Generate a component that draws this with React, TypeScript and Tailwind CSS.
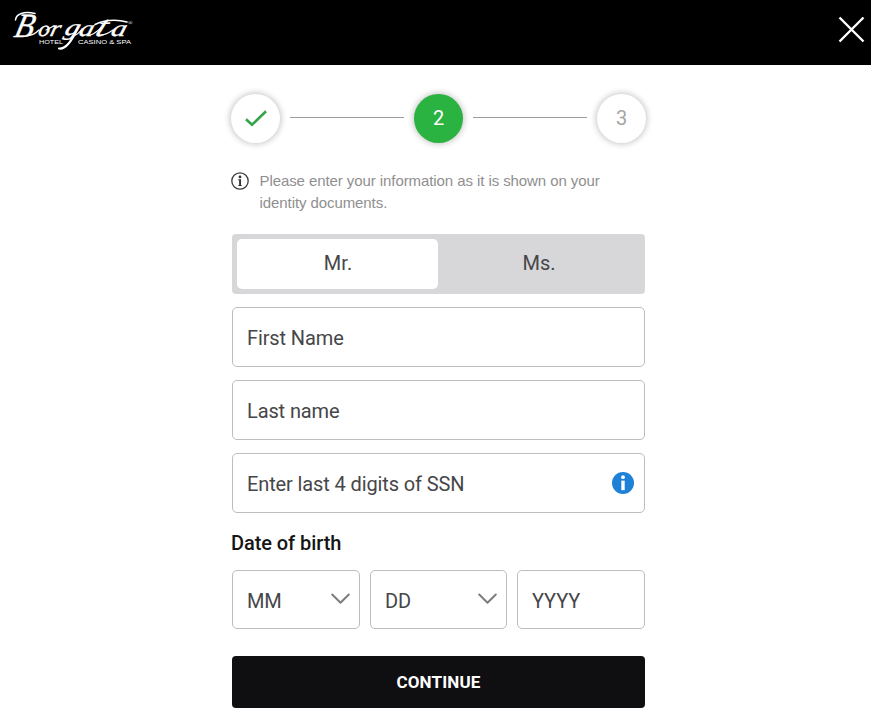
import { useState } from "react";
import type { ReactNode } from "react";
import clsx from "clsx";

function Logo() {
  return (
    <svg width="136" height="56" viewBox="0 0 136 56" fill="#fff" role="img" aria-label="Borgata">
      <g fontFamily="'Liberation Serif', serif" fontStyle="italic" fontSize="23" stroke="#fff" strokeWidth="0.35">
        <text transform="translate(13 36.5) skewX(-14) scale(0.92 1)" fontSize="34">B</text>
        <text transform="translate(37.500 35.500) skewX(-10) scale(1 0.95)">o</text>
        <text transform="translate(49 35.500) skewX(-14) scale(1.15 1)">r</text>
        <text transform="translate(63.500 35) skewX(-20) scale(1.25 1)">g</text>
        <text transform="translate(78 35.500) skewX(-16) scale(1.25 1)">a</text>
        <text transform="translate(94 35.500) skewX(-22) scale(1.25 1)" fontSize="29">t</text>
        <text transform="translate(110 35.500) skewX(-16) scale(1.3 1)">a</text>
        <text x="128" y="25" fontSize="6" fontStyle="normal" strokeWidth="0">®</text>
      </g>
      {/* flourishes */}
      <g fill="none" stroke="#fff" strokeLinecap="round">
        <path d="M15.500 20C16 14 24 11 35 13.500" strokeWidth="1.5" />
        <path d="M27 35.500C32 36 36 33 39 30" strokeWidth="1.2" />
        <path d="M46 30C49 29 51 27 54 26" strokeWidth="1.2" />
        <path d="M59 48.500C65 49.500 72 41 78 27" strokeWidth="2.2" />
        <path d="M73 36C77 35 80 32 82 29" strokeWidth="1.2" />
        <path d="M90 35C94 34.500 97 31 101 28" strokeWidth="1.2" />
        <path d="M95 24.500C104 20.500 115 19 127 22" strokeWidth="1.5" />
        <path d="M101 35C106 35 110 32 113 30" strokeWidth="1.2" />
      </g>
      <g fontFamily="'Liberation Sans', sans-serif" fontSize="5.3">
        <text x="39" y="44" textLength="24" lengthAdjust="spacingAndGlyphs">HOTEL</text>
        <text x="78" y="44" textLength="53" lengthAdjust="spacingAndGlyphs">CASINO &amp; SPA</text>
      </g>
    </svg>
  );
}

function Step({ active, children }: { active?: boolean; children: ReactNode }) {
  return (
    <div
      className={clsx(
        "flex size-[49px] shrink-0 items-center justify-center rounded-full pb-px text-xl shadow-[0_0_6px_1px_rgba(0,0,0,0.24)]",
        active ? "bg-[#2bb341] text-white" : "bg-white text-[#a5a5a5]",
      )}
    >
      {children}
    </div>
  );
}

function StepLine() {
  return <div className="mx-2.5 mb-0.5 h-px flex-1 bg-[#9c9c9c]" />;
}

function Field({ label, className, children }: { label: string; className?: string; children?: ReactNode }) {
  return (
    <div
      className={clsx(
        "flex items-center justify-between rounded-[5px] border border-[#bdbdbf] bg-white pt-0.5 pl-3.5 text-xl tracking-[-0.12px] text-[#464648]",
        className,
      )}
    >
      <span>{label}</span>
      {children}
    </div>
  );
}

function Chevron() {
  return (
    <svg className="mr-[9px] mb-[3px]" width="19" height="12" viewBox="0 0 19 12" fill="none" stroke="#7d7d7f" strokeWidth="2">
      <path d="M1.200 1.500 9.500 9.800 17.800 1.500" strokeLinecap="round" strokeLinejoin="round" />
    </svg>
  );
}

const titles = ["Mr.", "Ms."];

function App() {
  const [title, setTitle] = useState("Mr.");

  return (
    <div className="h-[716px] bg-white font-['Roboto',sans-serif]">
      <header className="flex h-[65px] items-start justify-between bg-black">
        <Logo />
        <button type="button" aria-label="Close" className="mt-4 mr-[6px]">
          <svg width="27" height="27" viewBox="0 0 27 27" fill="none" stroke="#fff" strokeWidth="2.4">
            <path d="M1.500 1.500l24 24M25.500 1.500l-24 24" />
          </svg>
        </button>
      </header>

      <main className="ml-[232px] w-[413px] pt-[29px]">
        <div className="-mx-px flex items-center">
          <Step>
            <svg width="22" height="17" viewBox="0 0 22 17" fill="none" stroke="#35a34b" strokeWidth="2.6">
              <path d="M1 9.200 7 14.800 21 1.300" />
            </svg>
          </Step>
          <StepLine />
          <Step active>2</Step>
          <StepLine />
          <Step>3</Step>
        </div>

        <div className="mt-[27px] flex gap-[10.5px]">
          <svg className="mt-0.5 -ml-px shrink-0" width="18" height="18" viewBox="0 0 18 18">
            <circle cx="9" cy="9" r="8.2" fill="none" stroke="#3c3c3c" strokeWidth="1.3" />
            <circle cx="9" cy="4.9" r="1.4" fill="#333" />
            <path d="M7.300 7.300H10v5.900h.9v.9H7.200v-.9h.9V8.200h-.8z" fill="#333" />
          </svg>
          <p className="w-[360px] font-['Liberation_Sans',sans-serif] text-[15px] leading-[22px] tracking-[-0.08px] text-[#8f8f8f]">
            Please enter your information as it is shown on your identity documents.
          </p>
        </div>

        <div className="mt-5 flex h-[60px] rounded-[4px] bg-[#d7d7d9] p-[5px] pr-1.5">
          {titles.map((item) => (
            <button
              key={item}
              type="button"
              onClick={() => setTitle(item)}
              className={clsx("flex-1 rounded-[5px] pb-0.5 pl-px text-xl text-[#464648]", title === item && "bg-white")}
            >
              {item}
            </button>
          ))}
        </div>

        <div className="mt-[13px] space-y-[13px]">
          <Field label="First Name" className="h-[60px]" />
          <Field label="Last name" className="h-[60px]" />
          <Field label="Enter last 4 digits of SSN" className="h-[60px]">
            <svg className="mr-[10.5px] mb-0.5" width="22" height="22" viewBox="0 0 22 22">
              <circle cx="11" cy="11" r="11" fill="#1f80d8" />
              <circle cx="11" cy="5.2" r="1.9" fill="#fff" />
              <rect x="9.3" y="8.6" width="3.4" height="9.6" fill="#fff" />
            </svg>
          </Field>
        </div>

        <h2 className="mt-4 -ml-px text-xl leading-7 font-medium tracking-[-0.07px] text-[#151515]">Date of birth</h2>

        <div className="mt-[13px] flex gap-2.5">
          <Field label="MM" className="h-[59px] w-32">
            <Chevron />
          </Field>
          <Field label="DD" className="h-[59px] flex-1">
            <Chevron />
          </Field>
          <Field label="YYYY" className="h-[59px] w-32" />
        </div>

        <button
          type="button"
          className="mt-[27px] h-[52px] w-full rounded-[4px] bg-[#0f0f11] pt-0.5 text-[17px] font-bold tracking-[0.15px] text-white"
        >
          CONTINUE
        </button>
      </main>
    </div>
  );
}

export default App;
